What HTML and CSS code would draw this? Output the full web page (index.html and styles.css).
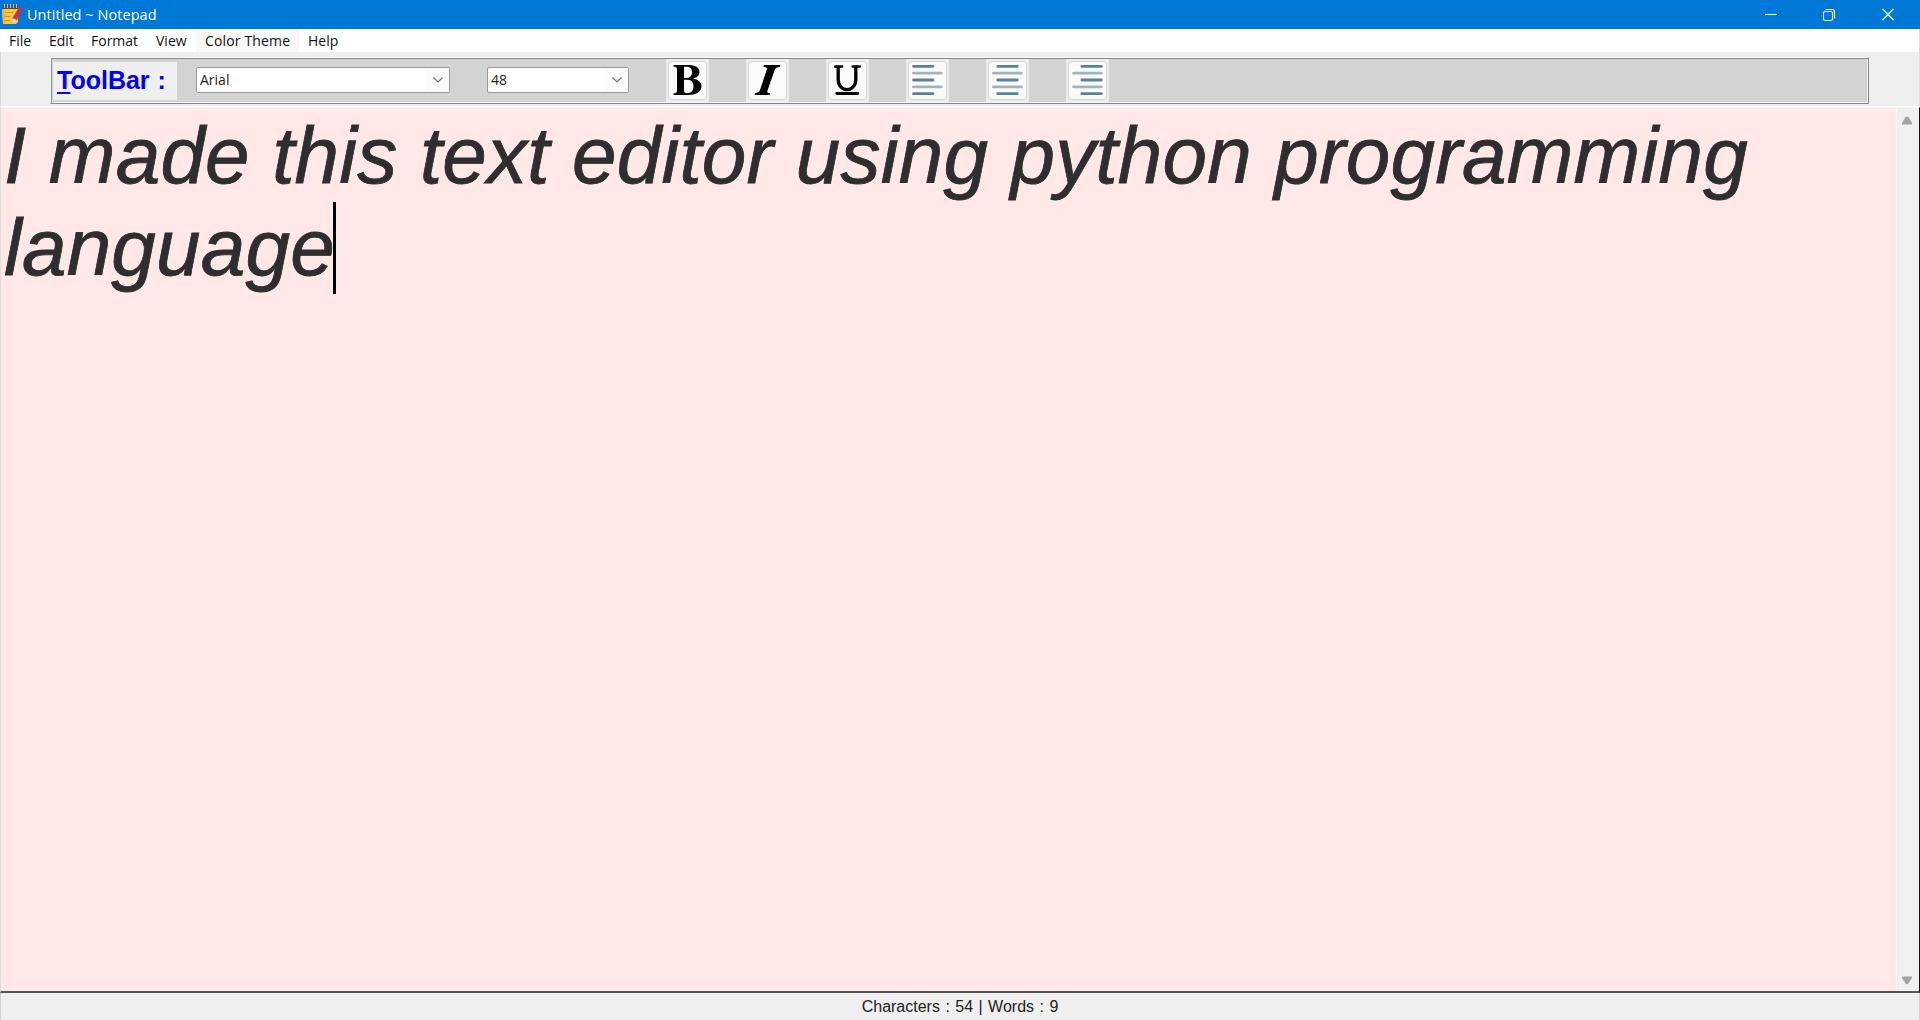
FILE: index.html
```html
<!DOCTYPE html>
<html lang="en">
<head>
<meta charset="utf-8">
<title>Untitled ~ Notepad</title>
<link rel="stylesheet" href="styles.css">
</head>
<body>
<div class="window">
  <header class="titlebar">
    <svg class="app-icon" width="20" height="21" viewBox="0 0 20 21">
      <path fill="#ffc83d" d="M0 4h16v14l-2 2H1z"/>
      <path fill="#fbb034" d="M0 4h3v16H1z"/>
      <path fill="#434b60" d="M0 1h16v4H0z"/>
      <path stroke="#b7c5d5" d="M2.5 0v4M5.5 0v4M8.5 0v4M11.5 0v4M14.5 0v4"/>
      <path stroke="#dc8c2d" d="M3 8.5h8M3 12.5h5M3 16.5h5"/>
      <path fill="#d92b4f" d="M17 3l3 1-5 12-5-1z"/>
      <path fill="#e9e4e9" d="M10.500 14l4 2-4 3z"/>
    </svg>
    <h1 class="title">Untitled ~ Notepad</h1>
    <svg class="window-controls" width="140" height="14" viewBox="0 0 140 14" fill="none" stroke="#fff" stroke-width="1.100">
      <path d="M0 6.500h12"/>
      <rect x="58.500" y="3.500" width="9" height="9" rx="1.500"/>
      <path d="M60.500 1.500h7a2 2 0 0 1 2 2v7"/>
      <path d="M117.500 1l11 11M128.500 1l-11 11"/>
    </svg>
  </header>
  <nav class="menubar">
    <span class="menu file">File</span>
    <span class="menu edit">Edit</span>
    <span class="menu format">Format</span>
    <span class="menu view">View</span>
    <span class="menu theme">Color Theme</span>
    <span class="menu help">Help</span>
  </nav>
  <div class="toolbar-row">
    <div class="toolbar">
      <div class="toolbar-label"><span class="key">T</span>oolBar :</div>
      <div class="combo font-combo"><span class="value">Arial</span><span class="drop"><svg width="12" height="8" viewBox="0 0 12 8"><path d="M1.500 1.500l4.500 4.500 4.500-4.500" fill="none" stroke="#777" stroke-width="1.200"/></svg></span></div>
      <div class="combo size-combo"><span class="value">48</span><span class="drop"><svg width="12" height="8" viewBox="0 0 12 8"><path d="M1.500 1.500l4.500 4.500 4.500-4.500" fill="none" stroke="#777" stroke-width="1.200"/></svg></span></div>
      <div class="tools">
        <div class="tool"><div class="face"><svg width="38" height="38" viewBox="0 0 38 38">
          <path fill="#000" fill-rule="evenodd" d="M5.500 4H20C27 4 31.500 6.500 31.500 11C31.500 14.500 29 16.500 25 17.500C30 18.500 33.500 21 33.500 25C33.500 31 28 34 20 34H5.500V32.500C8 32.300 9 31.500 9 29.500V8.500C9 6.500 8 5.700 5.500 5.500ZM16 5.800V17H18C22 17 24 15 24 11.500C24 7.500 22 5.800 18 5.800ZM16 18.800V29.500C16 31.500 17 32.200 19 32.200C23 32.200 25.500 30 25.500 25.500C25.500 20.500 23 18.800 18 18.800Z"/></svg></div></div>
        <div class="tool"><div class="face"><svg width="38" height="38" viewBox="0 0 38 38">
          <path fill="#000" d="M16 4H32.500L32 6C28.500 6 27.500 7 26.700 9L19.500 29.500C18.900 31.500 19.500 32 22 32L21.500 34H6.500L7 32C10 32 11.200 31 12 29L18.700 9C19.500 6.700 18.500 6 15.500 6Z"/></svg></div></div>
        <div class="tool"><div class="face"><svg width="38" height="38" viewBox="0 0 38 38">
          <path fill="none" stroke="#000" stroke-width="3.300" d="M10.200 5.500V18.500C10.200 32 27.800 32 27.800 18.500V5.500"/>
          <path stroke="#000" stroke-width="2.500" stroke-linecap="round" d="M7.200 5.500h7M24.800 5.500h7"/>
          <path stroke="#000" stroke-width="2.800" stroke-linecap="round" d="M8.800 32.500h21"/></svg></div></div>
        <div class="tool"><div class="face"><svg width="38" height="38" viewBox="0 0 38 38" stroke-width="2.800" stroke-linecap="round">
          <path stroke="#5b8292" d="M5.500 5.300h19.500M5.500 19h19.500M5.500 32.700h19.500"/><path stroke="#a0b4bf" d="M5.500 12.200h27.800M5.500 25.900h27.800"/></svg></div></div>
        <div class="tool"><div class="face"><svg width="38" height="38" viewBox="0 0 38 38" stroke-width="2.800" stroke-linecap="round">
          <path stroke="#5b8292" d="M9.700 5.300h19.500M9.700 19h19.500M9.700 32.700h19.500"/><path stroke="#a0b4bf" d="M5.500 12.200h27.800M5.500 25.900h27.800"/></svg></div></div>
        <div class="tool"><div class="face"><svg width="38" height="38" viewBox="0 0 38 38" stroke-width="2.800" stroke-linecap="round">
          <path stroke="#5b8292" d="M13.800 5.300h19.500M13.800 19h19.500M13.800 32.700h19.500"/><path stroke="#a0b4bf" d="M5.500 12.200h27.800M5.500 25.900h27.800"/></svg></div></div>
      </div>
    </div>
  </div>
  <main class="editor">
    <div class="document">I made this text editor using python programming<br>language<span class="caret"></span></div>
    <div class="scrollbar">
      <svg width="12" height="9" viewBox="0 0 12 9"><path fill="#a3a3a3" d="M4.500 1Q6 0 7.500 1L11 7V8.500H1V7z"/></svg>
      <svg width="12" height="9" viewBox="0 0 12 9"><path fill="#a3a3a3" d="M4.500 7.500Q6 9 7.500 7.500L11 2V.5H1V2z"/></svg>
    </div>
  </main>
  <footer class="statusbar">Characters : 54 | Words : 9</footer>
</div>
</body>
</html>
```
FILE: styles.css
```css
* { box-sizing: border-box; }
body { margin: 0; overflow: hidden; font-family: "Open Sans", "Noto Sans", sans-serif; }
.window { width: 1920px; height: 1020px; display: flex; flex-direction: column; background: #efefef; }
svg { display: block; flex: none; }

.titlebar { height: 29px; flex: none; display: flex; align-items: center; background: #0078d7; color: #fff; padding-left: 2px; padding-right: 15px; }
.title { margin: 0 0 0 5px; font-size: 14.5px; line-height: 28px; font-weight: 400; letter-spacing: 0.05px; white-space: nowrap; }
.window-controls { margin-left: auto; }

.menubar { height: 23px; flex: none; display: flex; background: #fff; color: #111; font-size: 14px; line-height: 24px; border-right: 1px solid #ddd; }
.menu { flex: none; padding-left: 9px; white-space: nowrap; letter-spacing: 0; }
.file { width: 40px; }
.edit { width: 42px; }
.format { width: 65px; }
.view { width: 49px; }
.theme { width: 103px; background: #f8f8f8; letter-spacing: 0.15px; }

.toolbar-row { height: 55px; flex: none; padding: 5px 50px 2px; border-left: 1px solid #d8d8d8; border-right: 1px solid #ddd; border-bottom: 1px solid #fff; }
.toolbar { height: 47px; margin-left: -1px; display: flex; align-items: center; background: #d3d3d3; border: 1px solid; border-color: #f8f8f8 #878787 #878787 #f4f4f4; box-shadow: inset 0 1px #878787, inset 1px 0 #929292, inset -1px 0 #f4f4f4, inset 0 -1px #f4f4f4; }
.toolbar-label { width: 124px; height: 38px; margin-left: 2px; padding-left: 4px; background: #efefef; color: #00f; font: bold 25px/37px "Liberation Sans", Arial, sans-serif; word-spacing: 1px; white-space: pre; }
.key { text-decoration: underline 2px; text-underline-offset: 3px; text-decoration-skip-ink: none; }
.combo { height: 26px; margin-top: -1px; display: flex; justify-content: space-between; background: #fff; border: 1px solid #999; border-radius: 2px; font-size: 14px; line-height: 24px; color: #222; padding-left: 3px; }
.value { letter-spacing: 0; }
.font-combo { width: 254px; margin-left: 19px; }
.size-combo { width: 142px; margin-left: 37px; }
.drop { width: 22px; background: #fafafa; display: flex; align-items: center; justify-content: center; }
.tools { display: flex; gap: 37px; margin-left: 37px; }
.tool { width: 43px; height: 43px; padding: 2px; background: #ededed; }
.face { width: 39px; height: 39px; background: #fafafa; border: 1px solid #d4d4d4; border-radius: 4px; }
.face svg { margin: -1px 0 0 -1px; }

.editor { height: 886px; flex: none; display: flex; justify-content: space-between; background: #ffe8e7; border: solid; border-width: 1px 1px 2px; border-color: #fff1f0 #111 #555 #ddd; }
.document { padding: 2px 0 0 3px; color: #2e2e2e; font: italic 80px/92.300px "Liberation Sans", Arial, sans-serif; letter-spacing: 0.2px; -webkit-text-stroke: 0.800px #2e2e2e; white-space: nowrap; }
.caret { display: inline-block; width: 3px; height: 92px; margin-left: -1.500px; background: #000; vertical-align: -19px; }
.scrollbar { width: 23px; background: #f0f0f0; border-left: 1px solid #fff8f8; display: flex; flex-direction: column; align-items: center; justify-content: space-between; padding: 8px 2px 6px 0; }

.statusbar { flex: 1; border: 1px solid #d2d2d2; border-top: 0; text-align: center; color: #222; font: 16px/27px "Liberation Sans", Arial, sans-serif; word-spacing: 1px; }
```
